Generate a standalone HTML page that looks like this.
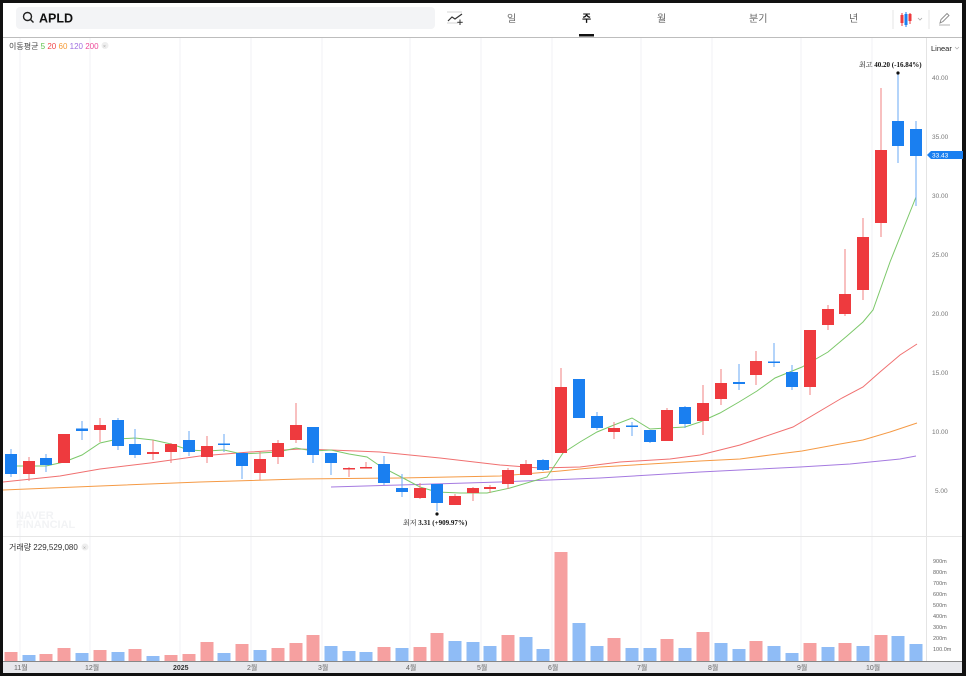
<!DOCTYPE html>
<html><head><meta charset="utf-8"><style>
html,body{margin:0;padding:0;background:#111;}
body{width:966px;height:676px;position:relative;overflow:hidden;font-family:"Liberation Sans","Noto Sans CJK KR",sans-serif;}
#scr{position:absolute;left:3px;top:3px;width:959px;height:670px;background:#fff;border-radius:0 0 0 6px;overflow:hidden;}
.abs{position:absolute;}
.tab{position:absolute;top:12px;font-size:10px;color:#555;}
</style></head><body>
<div id="scr"></div>
<svg class="abs" style="left:0;top:0" width="966" height="676" xmlns="http://www.w3.org/2000/svg" font-family="Liberation Sans, Noto Sans CJK KR, sans-serif">
<!-- header -->
<rect x="16" y="7" width="419" height="22" rx="4" fill="#f3f4f6"/>
<circle cx="27.5" cy="16.5" r="4" fill="none" stroke="#222" stroke-width="1.4"/>
<line x1="30.5" y1="19.5" x2="33.5" y2="22.5" stroke="#222" stroke-width="1.4"/>
<text x="39" y="22.5" font-size="12.5" font-weight="bold" fill="#111">APLD</text>
<line x1="447" y1="12" x2="462" y2="12" stroke="#ccc" stroke-width="0.8"/>
<line x1="447" y1="23" x2="458" y2="23" stroke="#ccc" stroke-width="0.8"/>
<polyline points="448,21 452,17 455,19 462,14" fill="none" stroke="#333" stroke-width="1.2"/>
<line x1="460" y1="19.5" x2="460" y2="25" stroke="#333" stroke-width="1"/><line x1="457.3" y1="22.3" x2="462.7" y2="22.3" stroke="#333" stroke-width="1"/>
<text x="507" y="22" font-size="10" fill="#666">일</text>
<text x="582" y="22" font-size="10" fill="#111" font-weight="bold">주</text>
<rect x="579" y="34" width="15" height="2.5" fill="#111"/>
<text x="657" y="22" font-size="10" fill="#666">월</text>
<text x="749" y="22" font-size="10" fill="#666">분기</text>
<text x="849" y="22" font-size="10" fill="#666">년</text>
<line x1="893" y1="10" x2="893" y2="29" stroke="#e6e6e6"/>
<line x1="929" y1="10" x2="929" y2="29" stroke="#e6e6e6"/>
<line x1="902" y1="13" x2="902" y2="26" stroke="#ee3a3e"/><rect x="900.5" y="15" width="3" height="8" fill="#ee3a3e"/>
<line x1="906" y1="12" x2="906" y2="27" stroke="#1a7ff0"/><rect x="904.5" y="14" width="3" height="11" fill="#1a7ff0"/>
<line x1="910" y1="13" x2="910" y2="24" stroke="#ee3a3e"/><rect x="908.5" y="14" width="3" height="7" fill="#ee3a3e"/>
<polyline points="918,18 920,20 922,18" fill="none" stroke="#aaa" stroke-width="0.8"/>
<path d="M940 23 L941 19.5 L947 13.5 L949 15.5 L943 21.5 Z" fill="none" stroke="#888" stroke-width="0.9"/>
<line x1="939" y1="25" x2="950" y2="25" stroke="#aaa" stroke-width="0.9"/>
<line x1="3" y1="37.5" x2="962" y2="37.5" stroke="#bdbdbd"/>
<!-- grid -->
<g stroke="#f1f2f4" stroke-width="1">
<line x1="20" y1="38" x2="20" y2="661"/><line x1="90" y1="38" x2="90" y2="661"/><line x1="180" y1="38" x2="180" y2="661"/><line x1="251" y1="38" x2="251" y2="661"/><line x1="322" y1="38" x2="322" y2="661"/><line x1="410" y1="38" x2="410" y2="661"/><line x1="481" y1="38" x2="481" y2="661"/><line x1="552" y1="38" x2="552" y2="661"/><line x1="641" y1="38" x2="641" y2="661"/><line x1="712" y1="38" x2="712" y2="661"/><line x1="801" y1="38" x2="801" y2="661"/><line x1="872" y1="38" x2="872" y2="661"/>
</g>
<line x1="926.5" y1="38" x2="926.5" y2="661" stroke="#e4e4e4"/>
<line x1="3" y1="536.5" x2="962" y2="536.5" stroke="#e6e6e6"/>
<text x="9" y="49" font-size="8" fill="#444">이동평균 <tspan fill="#5cc24a">5</tspan> <tspan fill="#f0464a">20</tspan> <tspan fill="#f59a35">60</tspan> <tspan fill="#a070e0">120</tspan> <tspan fill="#ee4a9a">200</tspan></text>
<circle cx="105" cy="45.5" r="3.5" fill="#eee"/><text x="103" y="48" font-size="5" fill="#aaa">×</text>
<text x="931" y="51" font-size="7.5" fill="#222">Linear</text>
<polyline points="955,47 957,49 959,47" fill="none" stroke="#aaa" stroke-width="0.7"/>
<!-- price axis labels -->
<g font-size="6.5" fill="#777">
<text x="932" y="80">40.00</text><text x="932" y="139">35.00</text><text x="932" y="198">30.00</text><text x="932" y="257">25.00</text><text x="932" y="316">20.00</text><text x="932" y="375">15.00</text><text x="932" y="434">10.00</text><text x="935" y="493">5.00</text>
</g>
<path d="M927 155 L931 151 L963 151 L963 159 L931 159 Z" fill="#1a7ff0"/>
<text x="932" y="157.5" font-size="6.5" fill="#fff">33.43</text>
<text x="16" y="519" font-size="11" font-weight="bold" fill="#f2f3f5">NAVER</text>
<text x="16" y="528" font-size="11" font-weight="bold" fill="#f2f3f5">FINANCIAL</text>
<!-- MAs -->
<polyline fill="none" stroke="#a57ae0" stroke-width="1" points="331,487 400,485 500,482 600,478 650,475 700,472 760,469 800,467 850,464 900,459 916,456"/>
<polyline fill="none" stroke="#f59a45" stroke-width="1" points="3,490 100,486 200,482 300,479 400,478 500,476 560,471 600,467 650,464 700,461 740,459 770,455 802,451 840,444 863,440 890,432 917,423"/>
<polyline fill="none" stroke="#f07070" stroke-width="1" points="3,482 60,476 100,469 150,463 200,456 250,452 300,449 331,450 380,452 440,458 500,465 540,468 580,467 620,462 670,459 700,455 740,445 793,427 842,398 863,387 880,372 900,355 917,344"/>
<polyline fill="none" stroke="#7cc86a" stroke-width="1" points="5,466 46,466 64,462 82,455 100,443 118,439 135,438 153,440 171,444 189,450 207,451 224,450 242,454 260,453 278,452 296,448 313,451 331,450 349,454 367,457 380,466 403,478 420,487 437,492 460,493 487,493 510,488 547,477 563,453 580,442 597,432 614,425 632,418 650,429 667,428 685,427 700,422 720,413 739,402 757,391 775,378 802,367 828,352 847,336 863,322 873,310 890,262 916,197"/>
<!-- candles -->
<g stroke-width="1">
<g stroke="#6aaaf5"><line x1="11" y1="449" x2="11" y2="477"/><line x1="46" y1="454" x2="46" y2="472"/><line x1="82" y1="421" x2="82" y2="440"/><line x1="118" y1="418" x2="118" y2="450"/><line x1="135" y1="429" x2="135" y2="458"/><line x1="189" y1="431" x2="189" y2="456"/><line x1="224" y1="434" x2="224" y2="452"/><line x1="242" y1="453" x2="242" y2="479"/><line x1="313" y1="427" x2="313" y2="463"/><line x1="331" y1="453" x2="331" y2="475"/><line x1="384" y1="456" x2="384" y2="485"/><line x1="402" y1="474" x2="402" y2="497"/><line x1="437" y1="484" x2="437" y2="511"/><line x1="543" y1="459" x2="543" y2="471"/><line x1="579" y1="379" x2="579" y2="418"/><line x1="597" y1="412" x2="597" y2="430"/><line x1="632" y1="422" x2="632" y2="436"/><line x1="650" y1="430" x2="650" y2="443"/><line x1="685" y1="406" x2="685" y2="428"/><line x1="739" y1="364" x2="739" y2="390"/><line x1="774" y1="343" x2="774" y2="367"/><line x1="792" y1="365" x2="792" y2="390"/><line x1="898" y1="72" x2="898" y2="163"/><line x1="916" y1="121" x2="916" y2="206"/></g>
<g stroke="#f08080"><line x1="29" y1="457" x2="29" y2="481"/><line x1="64" y1="434" x2="64" y2="463"/><line x1="100" y1="418" x2="100" y2="442"/><line x1="153" y1="440" x2="153" y2="460"/><line x1="171" y1="443" x2="171" y2="463"/><line x1="207" y1="436" x2="207" y2="463"/><line x1="260" y1="452" x2="260" y2="480"/><line x1="278" y1="440" x2="278" y2="464"/><line x1="296" y1="403" x2="296" y2="443"/><line x1="349" y1="467" x2="349" y2="477"/><line x1="366" y1="462" x2="366" y2="468"/><line x1="420" y1="483" x2="420" y2="499"/><line x1="455" y1="494" x2="455" y2="505"/><line x1="473" y1="487" x2="473" y2="501"/><line x1="490" y1="485" x2="490" y2="493"/><line x1="508" y1="468" x2="508" y2="489"/><line x1="526" y1="460" x2="526" y2="475"/><line x1="561" y1="368" x2="561" y2="453"/><line x1="614" y1="422" x2="614" y2="439"/><line x1="667" y1="408" x2="667" y2="441"/><line x1="703" y1="385" x2="703" y2="435"/><line x1="721" y1="369" x2="721" y2="405"/><line x1="756" y1="351" x2="756" y2="385"/><line x1="810" y1="330" x2="810" y2="395"/><line x1="828" y1="305" x2="828" y2="330"/><line x1="845" y1="249" x2="845" y2="316"/><line x1="863" y1="218" x2="863" y2="300"/><line x1="881" y1="88" x2="881" y2="237"/></g>
</g>
<g fill="#1a7ff0">
<rect x="5" y="454" width="12" height="20"/><rect x="40" y="458" width="12" height="7"/><rect x="76" y="428.5" width="12" height="2.5"/><rect x="112" y="420" width="12" height="26"/><rect x="129" y="444" width="12" height="11"/><rect x="183" y="440" width="12" height="12"/><rect x="218" y="443.5" width="12" height="1.5"/><rect x="236" y="453" width="12" height="13"/><rect x="307" y="427" width="12" height="28"/><rect x="325" y="453" width="12" height="10"/><rect x="378" y="464" width="12" height="19"/><rect x="396" y="488" width="12" height="4"/><rect x="431" y="484" width="12" height="19"/><rect x="537" y="460" width="12" height="10"/><rect x="573" y="379" width="12" height="39"/><rect x="591" y="416" width="12" height="12"/><rect x="626" y="425.5" width="12" height="1.5"/><rect x="644" y="430" width="12" height="12"/><rect x="679" y="407" width="12" height="17"/><rect x="733" y="382" width="12" height="2"/><rect x="768" y="361.5" width="12" height="1.5"/><rect x="786" y="372" width="12" height="15"/><rect x="892" y="121" width="12" height="25"/><rect x="910" y="129" width="12" height="27"/>
</g>
<g fill="#ee3a3e">
<rect x="23" y="461" width="12" height="13"/><rect x="58" y="434" width="12" height="29"/><rect x="94" y="425" width="12" height="5"/><rect x="147" y="452" width="12" height="2"/><rect x="165" y="444" width="12" height="8"/><rect x="201" y="446" width="12" height="11"/><rect x="254" y="459" width="12" height="14"/><rect x="272" y="443" width="12" height="14"/><rect x="290" y="425" width="12" height="15"/><rect x="343" y="468" width="12" height="1.5"/><rect x="360" y="467" width="12" height="1.5"/><rect x="414" y="488" width="12" height="10"/><rect x="449" y="496" width="12" height="9"/><rect x="467" y="488" width="12" height="5"/><rect x="484" y="487" width="12" height="2"/><rect x="502" y="470" width="12" height="14"/><rect x="520" y="464" width="12" height="11"/><rect x="555" y="387" width="12" height="66"/><rect x="608" y="428" width="12" height="4"/><rect x="661" y="410" width="12" height="31"/><rect x="697" y="403" width="12" height="18"/><rect x="715" y="383" width="12" height="16"/><rect x="750" y="361" width="12" height="14"/><rect x="804" y="330" width="12" height="57"/><rect x="822" y="309" width="12" height="16"/><rect x="839" y="294" width="12" height="20"/><rect x="857" y="237" width="12" height="53"/><rect x="875" y="150" width="12" height="73"/>
</g>
<circle cx="898" cy="73" r="1.6" fill="#111"/>
<text x="859" y="67" font-size="7" fill="#111" font-family="Liberation Serif, Noto Serif CJK SC, serif">최고  <tspan font-weight="bold">40.20 (-16.84%)</tspan></text>
<circle cx="437" cy="514" r="1.6" fill="#111"/>
<text x="403" y="525" font-size="7" fill="#111" font-family="Liberation Serif, Noto Serif CJK SC, serif">최저  <tspan font-weight="bold">3.31 (+909.97%)</tspan></text>
<!-- volume -->
<text x="9" y="550" font-size="8" fill="#333">거래량 229,529,080</text>
<circle cx="85" cy="547" r="3.5" fill="#eee"/><text x="83" y="549.5" font-size="5" fill="#aaa">×</text>
<g font-size="5.5" fill="#666">
<text x="933" y="563">900m</text><text x="933" y="574">800m</text><text x="933" y="585">700m</text><text x="933" y="596">600m</text><text x="933" y="607">500m</text><text x="933" y="618">400m</text><text x="933" y="629">300m</text><text x="933" y="640">200m</text><text x="933" y="651">100.0m</text>
</g>
<g fill="#f6a0a0">
<rect x="4.5" y="652" width="13" height="9"/><rect x="39.5" y="654" width="13" height="7"/><rect x="57.5" y="648" width="13" height="13"/><rect x="93.5" y="650" width="13" height="11"/><rect x="128.5" y="649" width="13" height="12"/><rect x="164.5" y="655" width="13" height="6"/><rect x="182.5" y="654" width="13" height="7"/><rect x="200.5" y="642" width="13" height="19"/><rect x="235.5" y="644" width="13" height="17"/><rect x="271.5" y="648" width="13" height="13"/><rect x="289.5" y="643" width="13" height="18"/><rect x="306.5" y="635" width="13" height="26"/><rect x="377.5" y="647" width="13" height="14"/><rect x="413.5" y="647" width="13" height="14"/><rect x="430.5" y="633" width="13" height="28"/><rect x="501.5" y="635" width="13" height="26"/><rect x="554.5" y="552" width="13" height="109"/><rect x="607.5" y="638" width="13" height="23"/><rect x="660.5" y="639" width="13" height="22"/><rect x="696.5" y="632" width="13" height="29"/><rect x="749.5" y="641" width="13" height="20"/><rect x="803.5" y="643" width="13" height="18"/><rect x="838.5" y="643" width="13" height="18"/><rect x="874.5" y="635" width="13" height="26"/>
</g>
<g fill="#8fbcf6">
<rect x="22.5" y="655" width="13" height="6"/><rect x="75.5" y="653" width="13" height="8"/><rect x="111.5" y="652" width="13" height="9"/><rect x="146.5" y="656" width="13" height="5"/><rect x="217.5" y="653" width="13" height="8"/><rect x="253.5" y="650" width="13" height="11"/><rect x="324.5" y="646" width="13" height="15"/><rect x="342.5" y="651" width="13" height="10"/><rect x="359.5" y="652" width="13" height="9"/><rect x="395.5" y="648" width="13" height="13"/><rect x="448.5" y="641" width="13" height="20"/><rect x="466.5" y="642" width="13" height="19"/><rect x="483.5" y="646" width="13" height="15"/><rect x="519.5" y="637" width="13" height="24"/><rect x="536.5" y="649" width="13" height="12"/><rect x="572.5" y="623" width="13" height="38"/><rect x="590.5" y="646" width="13" height="15"/><rect x="625.5" y="648" width="13" height="13"/><rect x="643.5" y="648" width="13" height="13"/><rect x="678.5" y="648" width="13" height="13"/><rect x="714.5" y="643" width="13" height="18"/><rect x="732.5" y="649" width="13" height="12"/><rect x="767.5" y="646" width="13" height="15"/><rect x="785.5" y="653" width="13" height="8"/><rect x="821.5" y="647" width="13" height="14"/><rect x="856.5" y="646" width="13" height="15"/><rect x="891.5" y="636" width="13" height="25"/><rect x="909.5" y="644" width="13" height="17"/>
</g>
<!-- time axis -->
<rect x="3" y="661" width="959" height="12" fill="#e7e8ec"/>
<line x1="3" y1="661.5" x2="962" y2="661.5" stroke="#888"/>
<g font-size="7" fill="#666">
<text x="14" y="670">11월</text><text x="85" y="670">12월</text><text x="173" y="670" font-weight="bold" fill="#333">2025</text><text x="247" y="670">2월</text><text x="318" y="670">3월</text><text x="406" y="670">4월</text><text x="477" y="670">5월</text><text x="548" y="670">6월</text><text x="637" y="670">7월</text><text x="708" y="670">8월</text><text x="797" y="670">9월</text><text x="866" y="670">10월</text>
</g>
</svg>
</body></html>
